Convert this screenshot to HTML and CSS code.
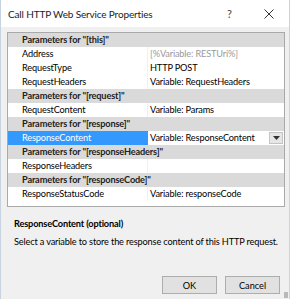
FILE: index.html
```html
<!DOCTYPE html>
<html lang="en">
<head>
    <meta charset="UTF-8">
    <title>Call HTTP Web Service Properties</title>
    <link rel="stylesheet" href="styles.css">
</head>
<body>

    <!-- Dialog window -->
    <div class="dialog">

        <!-- Title bar -->
        <div class="titlebar">
            <span class="title">Call HTTP Web Service Properties</span>
            <span class="title-btn help">?</span>
            <span class="title-btn close">
                <svg width="10" height="10" viewBox="0 0 10 10">
                    <path d="M0.5 0.5 L9.5 9.5 M9.5 0.5 L0.5 9.5" stroke="#333" stroke-width="1" fill="none"/>
                </svg>
            </span>
        </div>

        <!-- Property grid -->
        <div class="grid">
            <div class="row group">Parameters for "[this]"</div>
            <div class="row">
                <span class="name">Address</span>
                <span class="value muted">[%Variable: RESTUri%]</span>
            </div>
            <div class="row">
                <span class="name">RequestType</span>
                <span class="value">HTTP POST</span>
            </div>
            <div class="row">
                <span class="name">RequestHeaders</span>
                <span class="value">Variable: RequestHeaders</span>
            </div>
            <div class="row group">Parameters for "[request]"</div>
            <div class="row">
                <span class="name">RequestContent</span>
                <span class="value">Variable: Params</span>
            </div>
            <div class="row group">Parameters for "[response]"</div>
            <div class="row selected">
                <span class="name">ResponseContent</span>
                <span class="value editor">
                    Variable: ResponseContent
                    <span class="dropdown">
                        <svg width="7" height="4" viewBox="0 0 7 4">
                            <path d="M0 0 L7 0 L3.5 4 Z" fill="#333"/>
                        </svg>
                    </span>
                </span>
            </div>
            <div class="row group">Parameters for "[responseHeaders]"</div>
            <div class="row">
                <span class="name">ResponseHeaders</span>
                <span class="value"></span>
            </div>
            <div class="row group">Parameters for "[responseCode]"</div>
            <div class="row">
                <span class="name">ResponseStatusCode</span>
                <span class="value">Variable: responseCode</span>
            </div>
        </div>

        <!-- Description -->
        <div class="description">
            <div class="desc-title">ResponseContent (optional)</div>
            <div class="desc-text">Select a variable to store the response content of this HTTP request.</div>
        </div>

        <!-- Buttons -->
        <div class="buttons">
            <button class="button">OK</button>
            <button class="button">Cancel</button>
        </div>

        <span class="grip"></span>
    </div>

</body>
</html>
```

FILE: styles.css
```css
/* General Styles */
body {
    margin: 0;
    font-family: 'Lato', 'Noto Sans', sans-serif;
    font-size: 9.2px;
    letter-spacing: -0.15px;
    color: #000;
    background-color: #f0f0f0;
}

.dialog {
    position: relative;
    width: 290px;
    height: 299px;
    box-sizing: border-box;
    border-left: 1px solid #c7d3df;
    border-right: 1px solid #c7d3df;
    background-color: #f0f0f0;
    display: flex;
    flex-direction: column;
}

/* Title bar */
.titlebar {
    height: 27px;
    background-color: #fff;
    display: flex;
    align-items: center;
    padding-left: 7px;
}

.title {
    flex: 1;
    font-size: 10px;
    color: #222;
}

.title-btn {
    width: 39px;
    text-align: center;
    font-size: 11px;
    color: #444;
}

.close {
    display: flex;
    justify-content: center;
    margin-right: 1px;
}

/* Property grid */
.grid {
    margin: 5px 4px 0 6px;
    background-color: #fff;
    border: 1px solid #a9a9a9;
    padding-bottom: 5px;
}

.row {
    height: 14px;
    display: flex;
    align-items: center;
    line-height: 14px;
    white-space: nowrap;
}

.group {
    background-color: #dadada;
    font-weight: bold;
    padding-left: 14px;
    color: #222;
}

.name {
    width: 125px;
    padding-left: 14px;
    height: 14px;
    flex-shrink: 0;
}

.value {
    flex: 1;
    height: 14px;
    padding-left: 2px;
    border-left: 1px solid #f0f0f0;
}

.muted {
    color: #9a9a9a;
}

.selected .name {
    background-color: #3399ff;
    color: #fff;
}

.editor {
    position: relative;
    border-left: 1px solid #3399ff;
}

.dropdown {
    position: absolute;
    right: 1px;
    top: 1px;
    width: 12px;
    height: 10px;
    background-color: #e6e6e6;
    border: 1px solid #c4c4c4;
    display: flex;
    align-items: center;
    justify-content: center;
}

/* Description */
.description {
    padding: 10px 13px 0;
    white-space: nowrap;
}

.desc-title {
    font-weight: bold;
    line-height: 14px;
}

.desc-text {
    margin-top: 4px;
    line-height: 14px;
}

/* Buttons */
.buttons {
    margin-top: auto;
    display: flex;
    justify-content: flex-end;
    gap: 8px;
    padding: 0 9px 5px 0;
}

.button {
    width: 55px;
    height: 18px;
    padding: 0;
    font-family: inherit;
    font-size: 9.2px;
    background-color: #e1e1e1;
    border: 1px solid #adadad;
    color: #000;
}

.grip {
    position: absolute;
    right: 1px;
    bottom: 1px;
    width: 4px;
    height: 6px;
    background-image: radial-gradient(#b5b5b5 0.7px, transparent 0.8px);
    background-size: 2px 2px;
}
```
